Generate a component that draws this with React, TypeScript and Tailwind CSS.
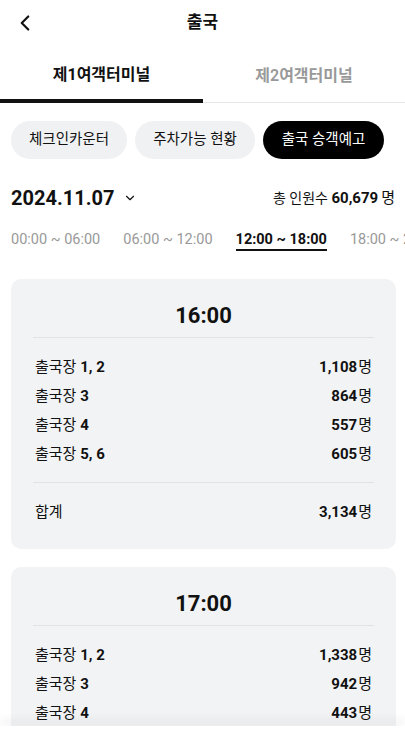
import { ChevronDown, ChevronLeft } from 'lucide-react';

const FONT = { fontFamily: 'Roboto, "Noto Sans CJK KR", sans-serif' };

type Gate = { name: string; num: string; count: string };

const SLOTS: { time: string; gates: Gate[]; total?: string }[] = [
  {
    time: '16:00',
    gates: [
      { name: '출국장', num: '1, 2', count: '1,108' },
      { name: '출국장', num: '3', count: '864' },
      { name: '출국장', num: '4', count: '557' },
      { name: '출국장', num: '5, 6', count: '605' },
    ],
    total: '3,134',
  },
  {
    time: '17:00',
    gates: [
      { name: '출국장', num: '1, 2', count: '1,338' },
      { name: '출국장', num: '3', count: '942' },
      { name: '출국장', num: '4', count: '443' },
      { name: '출국장', num: '5, 6', count: '612' },
    ],
    total: '3,335',
  },
];

const RANGES = ['00:00 ~ 06:00', '06:00 ~ 12:00', '12:00 ~ 18:00', '18:00 ~ 24:00'];

function Row({ label, count }: { label: React.ReactNode; count: string }) {
  return (
    <div className="flex h-[29px] items-center justify-between text-[15px] text-[#111]">
      <span>{label}</span>
      <span>
        <b className="font-bold">{count}</b>
        <span className="ml-[1px]">명</span>
      </span>
    </div>
  );
}

function SlotCard({ time, gates, total }: { time: string; gates: Gate[]; total?: string }) {
  return (
    <div className="mx-[11px] w-[385px] shrink-0 rounded-[10px] bg-[#f2f3f5] px-[22px] pt-[22px] pb-[22px]">
      <div className="h-[30px] text-center text-[22px] leading-[30px] font-bold text-[#111]">{time}</div>
      <div className="mt-[6px] h-px bg-[#e1e2e5]" />
      <div className="mt-[15px] px-[2px]">
        {gates.map((g) => (
          <Row
            key={g.num}
            count={g.count}
            label={
              <>
                {g.name} <b className="font-bold">{g.num}</b>
              </>
            }
          />
        ))}
      </div>
      {total ? (
        <>
          <div className="mt-[13px] h-px bg-[#e1e2e5]" />
          <div className="mt-[15px] px-[2px]">
            <Row label="합계" count={total} />
          </div>
        </>
      ) : null}
    </div>
  );
}

export default function App() {
  return (
    <div style={FONT} className="flex h-[729px] w-[405px] flex-col overflow-hidden bg-white text-[#111]">
      <div className="min-h-0 flex-1 overflow-hidden">
        {/* header */}
        <div className="grid h-[46px] grid-cols-[48px_1fr_48px] items-center">
          <ChevronLeft className="ml-[12px] h-[26px] w-[26px]" strokeWidth={2} />
          <div className="text-center text-[17px] font-bold">출국</div>
          <div />
        </div>

        {/* terminal tabs */}
        <div className="flex h-[57px]">
          <div className="flex w-[203px] items-end justify-center border-b-4 border-[#111] pb-[12px] text-[16px] font-bold">
            제1여객터미널
          </div>
          <div className="flex flex-1 items-end justify-center pb-[15px]">
            <span className="text-[16px] font-semibold text-[#999]">제2여객터미널</span>
          </div>
        </div>
        <div className="-mt-[1px] ml-[203px] h-px bg-[#e6e6e6]" />

        {/* chips */}
        <div className="mt-[18px] flex gap-[8px] px-[11px]">
          <div className="flex h-[38px] w-[116px] items-center justify-center rounded-full bg-[#f0f1f3] text-[14.5px]">
            체크인카운터
          </div>
          <div className="flex h-[38px] w-[120px] items-center justify-center rounded-full bg-[#f0f1f3] text-[14.5px]">
            주차가능 현황
          </div>
          <div className="flex h-[38px] w-[121px] items-center justify-center rounded-full bg-black text-[14.5px] text-white">
            출국 승객예고
          </div>
        </div>

        {/* date row */}
        <div className="mt-[25px] flex h-[28px] items-center justify-between pr-[10px] pl-[11px]">
          <div className="flex items-center">
            <span className="text-[20px] font-bold">2024.11.07</span>
            <ChevronDown className="ml-[9px] h-[14px] w-[14px]" strokeWidth={2} />
          </div>
          <div className="text-[14px]">
            총 인원수 <b className="text-[15px] font-bold">60,679</b>
            <span className="ml-[3px] text-[15px]">명</span>
          </div>
        </div>

        {/* time ranges */}
        <div className="mt-[19px] flex gap-[23px] overflow-hidden pl-[11px] whitespace-nowrap">
          {RANGES.map((r, i) => (
            <span
              key={r}
              className={
                i === 2
                  ? 'border-b-2 border-[#111] text-[14.5px] leading-[18px] font-bold text-[#111]'
                  : 'border-b-2 border-transparent text-[14.5px] leading-[18px] text-[#999]'
              }
            >
              {r}
            </span>
          ))}
        </div>

        {/* slot cards */}
        <div className="mt-[28px] flex flex-col gap-[18px]">
          {SLOTS.map((s) => (
            <SlotCard key={s.time} {...s} />
          ))}
        </div>
      </div>
      <div className="h-[3px] shrink-0 bg-white shadow-[0_-5px_10px_rgba(0,0,0,0.12)]" />
    </div>
  );
}
